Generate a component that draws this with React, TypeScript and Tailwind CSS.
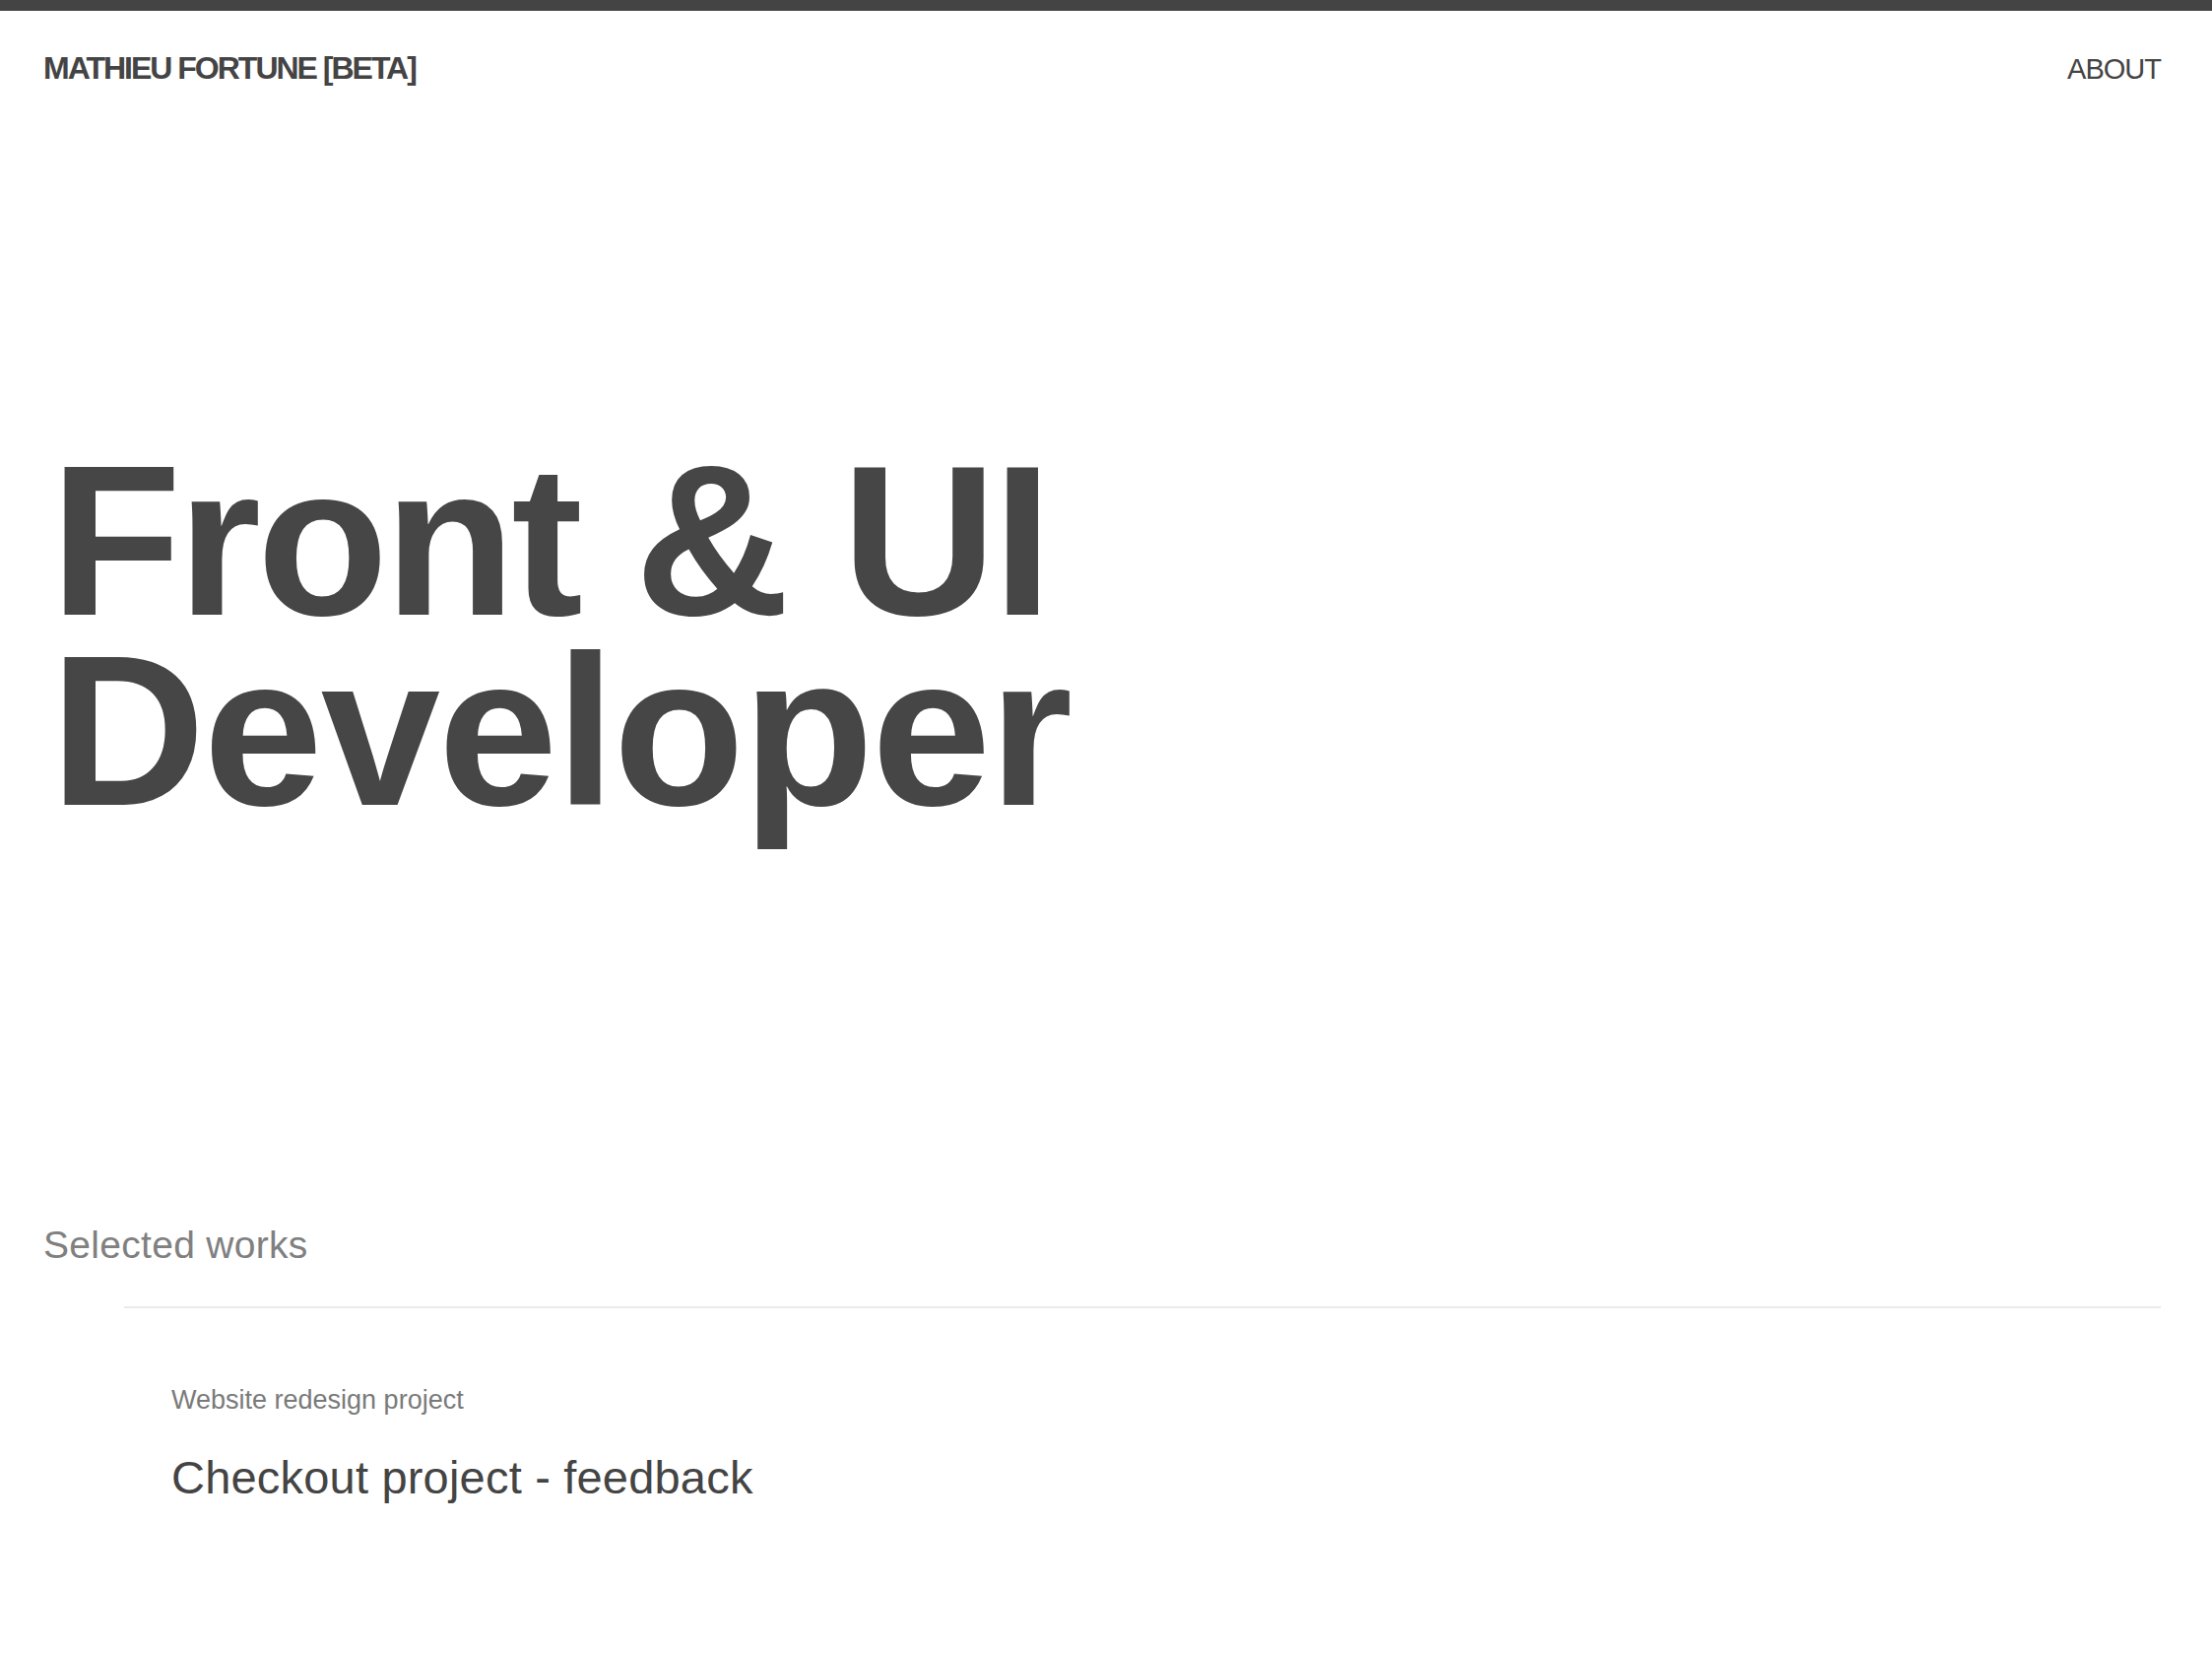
import React from "react";

const font = { fontFamily: '"Liberation Sans", Arial, Helvetica, sans-serif' };

export default function App() {
  return (
    <div className="min-h-screen bg-white text-[#444]" style={font}>
      <div className="h-[11px] bg-[#444]" />

      <div className="pl-[44px] pr-[52px]">
        <header className="flex items-baseline justify-between pt-[42px]">
          <a href="#" className="text-[32px] leading-none font-bold tracking-[-2px] text-[#444]">
            MATHIEU FORTUNE [BETA]
          </a>
          <a href="#" className="text-[29px] leading-none tracking-[-1px] text-[#444]">
            ABOUT
          </a>
        </header>

        <h1 className="mt-[367px] ml-[7px] text-[218px] leading-[193px] font-bold text-[#464646]">
          <span className="block tracking-[-4px]">Front &amp; UI</span>
          <span className="block tracking-[-2px]">Developer</span>
        </h1>

        <section className="mt-[406px]">
          <h2 className="text-[39px] leading-none tracking-[0.3px] text-[#808080]">Selected works</h2>

          <div className="mt-[43px] ml-[82px] h-[2px] bg-[#ebebeb]" />

          <div className="pl-[130px] pt-[80px] pb-[120px]">
            <p className="text-[27px] leading-none text-[#7a7a7a]">Website redesign project</p>
            <h3 className="mt-[41px] text-[47px] leading-none tracking-[0.2px] text-[#444]">
              Checkout project - feedback
            </h3>
          </div>
        </section>
      </div>
    </div>
  );
}
